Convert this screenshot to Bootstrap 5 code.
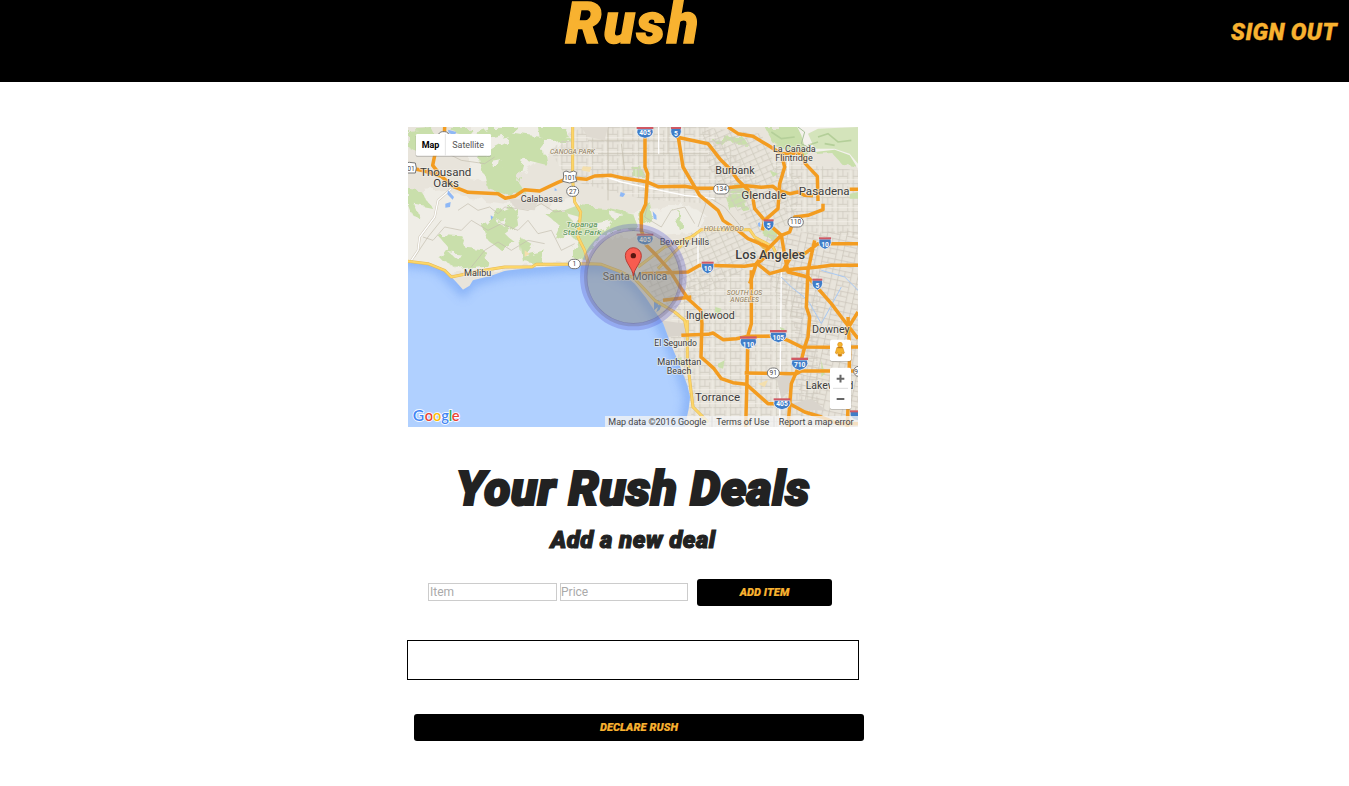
<!DOCTYPE html>
<html lang="en">
<head>
<meta charset="utf-8">
<meta name="viewport" content="width=device-width, initial-scale=1">
<title>Rush</title>
<link href="https://cdn.jsdelivr.net/npm/bootstrap@5.3.0/dist/css/bootstrap.min.css" rel="stylesheet">
<style>
body{font-family:Roboto,"Liberation Sans",sans-serif;color:#222;background:#fff}
.rush-head{height:82px;background:#000}
.stage{width:1266px}
.display-face{font-family:Roboto,sans-serif;font-weight:900;font-style:italic;white-space:nowrap}
.logo-text{font-size:57px;line-height:48px;color:#f8b230;letter-spacing:2px;-webkit-text-stroke:1.4px #f8b230}
.signout{font-size:23.5px;line-height:28px;color:#f8b230;letter-spacing:.3px;-webkit-text-stroke:.3px #f8b230;margin:18px 12px 0 0;position:absolute;right:0;top:0}
.panel{width:452px}
.map-box{width:450px;height:300px;margin:45px 1px 0}
.map-box svg{display:block}
.deals-title{font-size:48px;line-height:58px;margin-top:33px;-webkit-text-stroke:2.2px #222;letter-spacing:.6px}
.deals-sub{font-size:24px;line-height:30px;margin-top:7px;-webkit-text-stroke:1.1px #222;letter-spacing:.4px}
.deal-form{margin:24px 27px 0 21px;height:27px}
.deal-form input{height:18px;border:1px solid #ccc;border-radius:0;padding:0 1px;font-size:12px;line-height:16px;outline:0;margin-bottom:2px}
.deal-form input::placeholder{color:#aaa;opacity:1}
.in-item{width:129px;margin-right:3px}
.in-price{width:128px;margin-right:9px}
.deal-form .in-price{padding-left:0}
.btn-rush{height:27px;border:0;border-radius:3px;background:#000;color:#f8b230;font-size:11px;line-height:27px;padding:0;letter-spacing:.1px;-webkit-text-stroke:.2px #f8b230}
.btn-rush:hover{background:#222;color:#f8b230}
.btn-add{width:135px}
.deal-list{height:40px;border:1px solid #000;margin-top:34px}
.btn-declare{width:450px;margin:34px 0 0 7px}
.lbl{paint-order:stroke;stroke:#f4f1ea;stroke-opacity:.7;stroke-width:5px;stroke-linejoin:round;fill:#3c3c3c}
.shield text{fill:#fff;font-weight:700;font-size:20px;text-anchor:middle}
.oval text{fill:#444;font-weight:400;font-size:20px;text-anchor:middle}
.oval rect,.oval path{fill:#fff;stroke:#777;stroke-width:3}
</style>
</head>
<body>
<header class="rush-head position-relative">
  <div class="stage d-flex justify-content-center"><a class="logo-text display-face text-decoration-none" href="#">Rush</a></div>
  <a class="signout display-face text-decoration-none" href="#">SIGN OUT</a>
</header>
<main class="stage d-flex justify-content-center">
<div class="panel">
  <div class="map-box">
  <svg width="450" height="300" viewBox="0 0 1350 900" font-family="Roboto, sans-serif">
    <defs>
      <pattern id="gridA" width="46" height="42" patternUnits="userSpaceOnUse"><path d="M0 2H46M0 22H30M2 0V42M17 0V22M31 10V42" stroke="#d0cbc0" stroke-width="2.5" fill="none"/><path d="M0 32H46M40 0V30" stroke="#f5f2eb" stroke-width="2" fill="none"/></pattern>
      <pattern id="gridB" width="38" height="34" patternUnits="userSpaceOnUse" patternTransform="rotate(-24)"><path d="M0 2H38M0 19H38M2 0V34M20 0V19" stroke="#d0cbc0" stroke-width="2.5" fill="none"/></pattern>
      <pattern id="gridC" width="58" height="30" patternUnits="userSpaceOnUse" patternTransform="rotate(12)"><path d="M0 2H58M2 0V30M22 0V30M40 0V16M20 16H58" stroke="#cdc8bd" stroke-width="2.5" fill="none"/></pattern>
      <filter id="soft" x="-5%" y="-5%" width="110%" height="110%"><feGaussianBlur stdDeviation="14"/></filter>
      <filter id="edge" x="-10%" y="-10%" width="120%" height="120%"><feTurbulence type="fractalNoise" baseFrequency=".035" numOctaves="2" seed="4"/><feDisplacementMap in="SourceGraphic" scale="36"/></filter>
      <clipPath id="sea"><path id="seaShape" d="M0 402L55 410L95 422L125 445L145 466L165 488L185 476L195 460L250 446L290 432L372 422L480 416L545 410L600 420L640 438L680 470L712 510L740 552L765 588L788 650L815 715L838 775L846 810L842 845L830 900H0Z"/></clipPath>
    </defs>
    <rect width="1350" height="900" fill="#e8e4db"/>
    <!-- mountains -->
    <g filter="url(#edge)">
      <path fill="#efede6" d="M-20 200L110 185L180 215L290 230L420 235L500 215L560 270L690 250L840 235L900 270L860 320L700 330L550 330L520 400L300 425L130 440L-20 420ZM180 -20H500L480 40L400 90L300 170L180 150Z"/>
      <g fill="#c9dfab">
        <path d="M0 5L70 0L90 40L25 70L0 60ZM120 0L190 0L170 25L240 0H330L300 25L190 45ZM215 85L290 45L300 15L400 30L410 110L350 95L330 165L350 195L300 205L240 185ZM390 0H470L485 35L440 45L395 30Z"/>
        <path d="M0 185L35 190L70 240L20 230L40 280L10 260L0 235ZM258 260L320 235L330 290L290 320L320 345L280 370L240 340L225 295ZM85 320L160 325L175 365L230 370L240 415L155 425L95 395L120 360ZM335 330L370 350L350 385L410 370L400 410L345 405ZM410 260L475 250L495 290L470 335L435 325L450 290ZM520 235L590 240L675 260L690 300L620 310L560 345L535 400L490 390L510 340L480 320Z"/>
        <path d="M950 205L1000 195L1015 240L965 250ZM945 180L1020 175L1030 205L970 215ZM915 40L1000 25L1020 50L925 50ZM1070 0H1350V120L1300 110L1270 75L1180 80L1100 55Z"/>
        <path d="M700 250L725 225L735 270L700 295ZM800 265L815 250L820 300L810 305ZM670 120L705 120L710 150L675 150ZM1070 305L1110 310L1105 340L1070 330Z"/>
      </g>
      <g fill="#efede6"><path d="M560 290L610 280L600 300L570 310ZM265 285L300 280L290 300ZM120 375L160 380L150 395ZM600 250L650 265L610 270ZM250 105L280 100L275 120L255 120Z"/></g>
    </g>
    <path fill="#f3f1ec" d="M1168 0H1350V125L1325 85L1280 68L1220 75L1190 60L1180 25Z"/>
    <path fill="#c9dfab" opacity=".75" d="M1200 20L1230 5L1350 0V110L1325 80L1280 65L1220 65Z"/>
    <path d="M1170 0L1190 15L1180 50L1220 70" stroke="#a9c19a" stroke-width="3" fill="none"/>
    <path d="M1090 15L1120 35L1160 30M1230 30L1260 20L1290 45L1330 40M1250 50L1280 55M1200 55L1230 45" stroke="#b4cf99" stroke-width="5" fill="none"/>
    <!-- streets -->
    <path fill="url(#gridA)" d="M425 70L490 20L520 0H900L990 90L1060 180L900 230L700 215L480 160Z"/>
    <path fill="url(#gridB)" d="M880 0L1060 20L1100 110L1180 150L1160 290L1040 320L980 240L900 120ZM700 430L860 310L1000 300L1060 390L900 500L760 560Z"/>
    <path fill="url(#gridA)" d="M1090 100L1350 130V330L1150 310ZM860 430H1230V900H860L780 600Z"/>
    <path fill="url(#gridC)" d="M1080 320L1350 310V900H1180L1160 600L1050 400Z"/>
    <g fill="none" stroke="#c3bdae" stroke-width="2">
      <path d="M150 250L180 230L210 250L245 240L270 260L290 240L330 245L360 250L400 230L440 255L480 250M45 330L75 340L110 300L160 310L190 280L240 310L280 290L330 310L360 280L390 320L430 310L460 370L500 350M190 420L230 370L270 345L310 370L360 340L410 350M20 390L60 330L100 280M720 230L710 270L760 300L790 250L830 240L860 290M120 80L160 100L230 110L260 90M600 0V220M640 50L650 130M780 0V80M570 80H900M540 40H760M870 300L900 210L950 240L1000 300"/>
    </g>
    <path d="M10 400L30 370L35 330L80 270L90 220L130 185" fill="none" stroke="#cfc8b9" stroke-width="7"/>
    <g fill="none" stroke="#fff" stroke-width="4"><path d="M10 400L30 370L35 330L80 270L90 220L130 185M580 145L640 165L700 178L830 205L920 215M870 310V420M752 0V80M1140 80V150M1120 430L1115 900"/></g>
    <path fill="#d9d4cc" d="M755 580L835 590L840 625L780 630ZM1150 830L1210 815L1255 850L1180 850ZM1105 750L1150 740L1155 780L1120 815Z"/>
    <path fill="#dfdad1" d="M300 215L390 220L380 250L325 245ZM520 0L600 0L590 40L540 30Z"/>
    <path fill="#c9dfab" d="M922 540L940 545L935 560L920 558ZM930 710L950 700L945 725L930 720ZM1115 600L1130 605L1125 625ZM1240 700L1250 740L1240 750ZM470 250L510 235L515 270L480 260ZM800 700L820 690L825 720ZM1085 130L1110 140L1095 150ZM1325 200L1350 195V215H1325Z"/>
    <path fill="#f4dfad" d="M525 118L550 120L545 135L520 130ZM1170 700L1190 705L1180 715ZM350 370L365 380L350 390ZM790 745L810 740L805 760ZM1050 770L1080 760L1070 780Z"/>
    <path fill="#8eb8f6" d="M120 8L145 15L140 25L122 18ZM112 230L128 225L126 240L112 242ZM120 190L138 210L134 218L118 202ZM248 265L256 270L249 280ZM638 195L652 200L645 210L635 208ZM734 253L745 265L746 278L737 275ZM1050 288L1056 286L1057 300L1051 298ZM440 182L448 190L440 192Z"/>
    <path d="M1120 450L1150 480L1200 520L1240 590L1300 480M1240 430L1310 450L1350 490" stroke="#a9c9f3" stroke-width="3" fill="none"/>
    <!-- ocean -->
    <use href="#seaShape" fill="#b0d0ff"/>
    <g clip-path="url(#sea)"><path d="M-20 402L55 410L95 422L145 470L165 490L195 460L290 432L480 416L600 420L680 470L740 552L788 650L815 715L846 810L830 920" fill="none" stroke="#7eaaf5" stroke-width="34" opacity=".75" filter="url(#soft)"/></g>
    <path fill="#76a9ef" d="M738 525L752 518L750 535L763 528L755 548L745 556L750 540L738 550Z"/>
    <!-- secondary roads -->
    <g fill="none" stroke="#e7b956" stroke-width="9" stroke-linejoin="round"><path d="M-5 402L60 410L110 430L130 450L155 445L215 432L290 420L372 420L385 412L480 412L540 410L580 412L640 435L680 455L740 520L800 555L830 580L838 620M838 580V700L855 840L900 885M494 -5V160L500 225L518 255L510 330L530 370L540 405M750 425L830 345L880 308H1025L1040 330L1095 360L1110 390M1040 335L1075 370M690 420L770 360L850 330"/></g>
    <g fill="none" stroke="#fcd668" stroke-width="6" stroke-linejoin="round"><path d="M-5 402L60 410L110 430L130 450L155 445L215 432L290 420L372 420L385 412L480 412L540 410L580 412L640 435L680 455L740 520L800 555L830 580L838 620M838 580V700L855 840L900 885M494 -5V160L500 225L518 255L510 330L530 370L540 405M750 425L830 345L880 308H1025L1040 330L1095 360L1110 390M690 420L770 360L850 330"/></g>
    <!-- freeways -->
    <g fill="none" stroke="#f39c20" stroke-width="10.5" stroke-linejoin="round">
      <path d="M-5 120L50 132L100 148L135 178L180 196L270 200L292 214L320 208L350 188L395 192L450 166L485 152L535 157L560 147L610 145L650 154L715 164L750 179L830 178L865 184L940 184L1015 176L1060 181L1095 178L1110 190L1145 200L1170 195L1190 205L1215 206M110 0L108 40L80 86L74 115L98 145"/>
      <path d="M711 0V120L719 140L717 170L713 232L700 260L700 310L715 355L745 385L785 430L810 470L840 515L878 550L882 590L879 690L918 725L940 755L975 767L1015 772L1080 830H1145L1190 855L1240 870L1290 890H1350"/>
      <path d="M805 30L875 45L900 50L935 95L965 125L990 160L1020 188L1035 215L1040 245L1070 280L1120 325L1130 385L1140 435L1200 450L1270 530L1300 570L1350 635M810 25L825 120L875 205L930 250L945 280L990 310L1020 335L1080 360M960 0L990 20L1035 28L1080 55L1120 80L1130 120L1115 170L1110 245L1070 280L1063 310"/>
      <path d="M700 440L840 435L875 415L1010 418L1050 412L1085 440L1120 430L1230 420L1270 415L1350 415M1025 470L1045 410L1080 365L1120 325L1145 315L1160 270L1200 265L1245 248V230M1125 430L1155 380L1190 380L1230 350H1350M1220 340L1200 430L1195 540L1205 570L1200 630L1190 660L1180 700L1150 770L1140 900M1045 412L1085 380"/>
      <path d="M1030 430V590L1020 625L1017 760L1013 900M820 625L900 622L915 618L945 638L985 635L1020 628L1100 627L1140 640L1180 660L1280 661L1350 660M1010 738L1165 740L1180 732L1350 732M1320 570L1325 680L1318 900M1350 555L1310 620M765 520L850 510M1325 187H1350M1120 80L1180 78L1192 110L1228 148L1230 222"/>
    </g>
    <!-- route markers -->
    <g class="shield">
      <g id="sh405"><path fill="#3f7dc8" stroke="#fff" stroke-width="2" d="M688 6Q680 28 711 34Q742 28 734 6Z"/><path fill="#cf5964" d="M686 0H736V6H686Z"/><text x="711" y="24">405</text></g>
      <use href="#sh405" y="320"/>
      <use href="#sh405" x="411" y="814"/>
      <g id="sh5"><path fill="#3f7dc8" stroke="#fff" stroke-width="2" d="M789 4Q784 26 804 34Q824 26 819 4Z"/><path fill="#cf5964" d="M789 0H819V6H789Z"/><text x="804" y="27">5</text></g>
      <use href="#sh5" x="278" y="277"/><use href="#sh5" x="424" y="455"/>
      <g id="sh10"><path fill="#3f7dc8" stroke="#fff" stroke-width="2" d="M881 409Q877 433 899 440Q921 433 917 409Z"/><path fill="#cf5964" d="M881 404H917V410H881Z"/><text x="899" y="432">10</text></g>
      <use href="#sh10" x="352" y="-73"/>
      <g><path fill="#3f7dc8" stroke="#fff" stroke-width="2" d="M998 635Q990 658 1021 666Q1052 658 1044 635Z"/><path fill="#cf5964" d="M996 628H1046V635H996Z"/><text x="1021" y="659">110</text></g>
      <g><path fill="#3f7dc8" stroke="#fff" stroke-width="2" d="M1088 616Q1080 639 1111 647Q1142 639 1134 616Z"/><path fill="#cf5964" d="M1086 609H1136V616H1086Z"/><text x="1111" y="638">105</text></g>
      <g><path fill="#3f7dc8" stroke="#fff" stroke-width="2" d="M1152 699Q1144 722 1175 730Q1206 722 1198 699Z"/><path fill="#cf5964" d="M1150 692H1200V699H1150Z"/><text x="1175" y="721">710</text></g>
      <path fill="#3f7dc8" d="M1328 855Q1324 875 1350 880V855Z"/><path fill="#cf5964" d="M1326 850H1350V856H1326Z"/>
    </g>
    <g class="oval">
      <path d="M466 136L474 132L485 136L497 132L506 136L503 150L506 163L485 168L464 163L467 150Z"/><text x="485" y="158">101</text>
      <path d="M-12 108L4 106L22 108L25 123L22 138L-12 138Z"/><text x="9" y="131">01</text>
      <rect x="476" y="178" width="36" height="30" rx="15"/><text x="494" y="200">27</text>
      <rect x="481" y="397" width="36" height="28" rx="14"/><text x="499" y="418">1</text>
      <rect x="917" y="172" width="46" height="29" rx="14"/><text x="940" y="193">134</text>
      <rect x="1140" y="271" width="46" height="29" rx="14"/><text x="1163" y="292">110</text>
      <rect x="1078" y="723" width="36" height="30" rx="15"/><text x="1096" y="745">91</text>
      <rect x="1337" y="718" width="36" height="30" rx="15"/><text x="1344" y="740">9</text>
      <rect x="90" y="14" width="34" height="30" rx="14"/>
    </g>
    <!-- place names -->
    <g class="lbl">
      <g font-size="33"><text x="36" y="146" textLength="154" lengthAdjust="spacingAndGlyphs">Thousand</text><text x="76" y="180" textLength="77" lengthAdjust="spacingAndGlyphs">Oaks</text><text x="1000" y="217" textLength="135" lengthAdjust="spacingAndGlyphs">Glendale</text><text x="1172" y="205" textLength="153" lengthAdjust="spacingAndGlyphs">Pasadena</text><text x="861" y="823" textLength="135" lengthAdjust="spacingAndGlyphs">Torrance</text></g>
      <g font-size="31"><text x="922" y="140" textLength="118" lengthAdjust="spacingAndGlyphs">Burbank</text><text x="834" y="575" textLength="146" lengthAdjust="spacingAndGlyphs">Inglewood</text><text x="1212" y="617" textLength="113" lengthAdjust="spacingAndGlyphs">Downey</text><text x="1193" y="787" textLength="143" lengthAdjust="spacingAndGlyphs">Lakewood</text></g>
      <text x="982" y="395" font-size="36" font-weight="500" textLength="209" lengthAdjust="spacingAndGlyphs">Los Angeles</text>
      <g font-size="26"><text x="338" y="226" textLength="126" lengthAdjust="spacingAndGlyphs">Calabasas</text><text x="168" y="447" textLength="82" lengthAdjust="spacingAndGlyphs">Malibu</text><text x="1095" y="76" textLength="128" lengthAdjust="spacingAndGlyphs">La Cañada</text><text x="1102" y="103" textLength="112" lengthAdjust="spacingAndGlyphs">Flintridge</text><text x="755" y="353" textLength="149" lengthAdjust="spacingAndGlyphs">Beverly Hills</text><text x="739" y="657" textLength="128" lengthAdjust="spacingAndGlyphs">El Segundo</text><text x="748" y="713" textLength="132" lengthAdjust="spacingAndGlyphs">Manhattan</text><text x="776" y="740" textLength="74" lengthAdjust="spacingAndGlyphs">Beach</text></g>
      <text x="584" y="460" font-size="31" textLength="194" lengthAdjust="spacingAndGlyphs">Santa Monica</text>
      <g font-size="24" font-style="italic" fill="#4f9152"><text x="475" y="299" textLength="94" lengthAdjust="spacingAndGlyphs">Topanga</text><text x="464" y="324" textLength="116" lengthAdjust="spacingAndGlyphs">State Park</text></g>
      <g font-size="19" font-style="italic" fill="#8d7a58"><text x="426" y="82" textLength="135" lengthAdjust="spacingAndGlyphs">CANOGA PARK</text><text x="887" y="311" textLength="120" lengthAdjust="spacingAndGlyphs">HOLLYWOOD</text><text x="956" y="504" textLength="107" lengthAdjust="spacingAndGlyphs">SOUTH LOS</text><text x="967" y="525" textLength="86" lengthAdjust="spacingAndGlyphs">ANGELES</text></g>
    </g>
    <!-- deal radius and pin -->
    <circle cx="676" cy="450" r="140" fill="#848484" fill-opacity=".5"/>
    <circle cx="676" cy="450" r="149" fill="none" stroke="#5050cf" stroke-opacity=".29" stroke-width="22"/>
    <circle cx="676" cy="450" r="143" fill="none" stroke="#6c6880" stroke-opacity=".32" stroke-width="10"/>
    <path d="M676 447C674 424 652 408 652 386A24 24 0 0 1 700 386C700 408 678 424 676 447Z" fill="#f85c50" stroke="#b63d35" stroke-width="3"/><circle cx="676" cy="386" r="8" fill="#591710"/>
    <!-- map type control -->
    <rect x="23" y="23" width="226" height="67" rx="5" fill="#777" opacity=".35"/><rect x="24" y="21" width="225" height="65" rx="4" fill="#fff"/><path d="M112 21V86" stroke="#e4e4e4" stroke-width="3"/>
    <text x="41" y="63" font-size="27" font-weight="700" textLength="53" lengthAdjust="spacingAndGlyphs">Map</text><text x="133" y="63" font-size="27" fill="#565656" textLength="95">Satellite</text>
    <!-- attribution -->
    <path fill="#f5f5f5" fill-opacity=".76" d="M591 867H1350V900H591Z"/><path d="M912 868V900M1098 868V900" stroke="#d4d4d4" stroke-width="2"/>
    <g font-size="27" fill="#444"><text x="601" y="894" textLength="294">Map data ©2016 Google</text><text x="925" y="894" textLength="159">Terms of Use</text><text x="1112" y="894" textLength="225">Report a map error</text></g>
    <g font-family="Lato, sans-serif" font-weight="600" stroke="#fff" stroke-width="5" paint-order="stroke" font-size="44"><text y="883"><tspan x="14" fill="#4285f4" font-size="47">G</tspan><tspan x="50" fill="#ea4335">o</tspan><tspan x="75" fill="#fbbc05">o</tspan><tspan x="100" fill="#4285f4">g</tspan><tspan x="122" fill="#34a853">l</tspan><tspan x="131" fill="#ea4335">e</tspan></text></g>
    <!-- street view and zoom controls -->
    <rect x="1266" y="641" width="64" height="64" rx="5" fill="#777" opacity=".35"/><rect x="1266" y="638" width="63" height="64" rx="5" fill="#fff"/>
    <path d="M1287 661H1304L1309 678L1305 681L1302 676L1301 687H1291L1289 676L1286 681L1282 678Z" fill="#f5b32c" stroke="#dd901c" stroke-width="2"/><path d="M1290 682H1301L1299 688H1292Z" fill="#c27c18"/><circle cx="1296" cy="653" r="7" fill="#f5b32c" stroke="#dd901c" stroke-width="2"/><path d="M1289 662H1303" stroke="#bd7413" stroke-width="3"/>
    <rect x="1266" y="725" width="64" height="124" rx="5" fill="#777" opacity=".35"/><rect x="1266" y="722" width="63" height="124" rx="5" fill="#fff"/><path d="M1275 784H1320" stroke="#ddd" stroke-width="3"/>
    <path d="M1286 755H1309M1297.500 743.500V766.500M1286 816H1309" stroke="#666" stroke-width="6"/>
  </svg>
  </div>
  <h1 class="deals-title display-face text-center mb-0">Your Rush Deals</h1>
  <h2 class="deals-sub display-face text-center mb-0">Add a new deal</h2>
  <form class="deal-form d-flex align-items-center">
    <input class="in-item" type="text" placeholder="Item" aria-label="Item">
    <input class="in-price" type="text" placeholder="Price" aria-label="Price">
    <button type="button" class="btn btn-rush btn-add display-face">ADD ITEM</button>
  </form>
  <div class="deal-list"></div>
  <button type="button" class="btn btn-rush btn-declare display-face">DECLARE RUSH</button>
</div>
</main>
<script src="https://cdn.jsdelivr.net/npm/bootstrap@5.3.0/dist/js/bootstrap.bundle.min.js"></script>
</body>
</html>
